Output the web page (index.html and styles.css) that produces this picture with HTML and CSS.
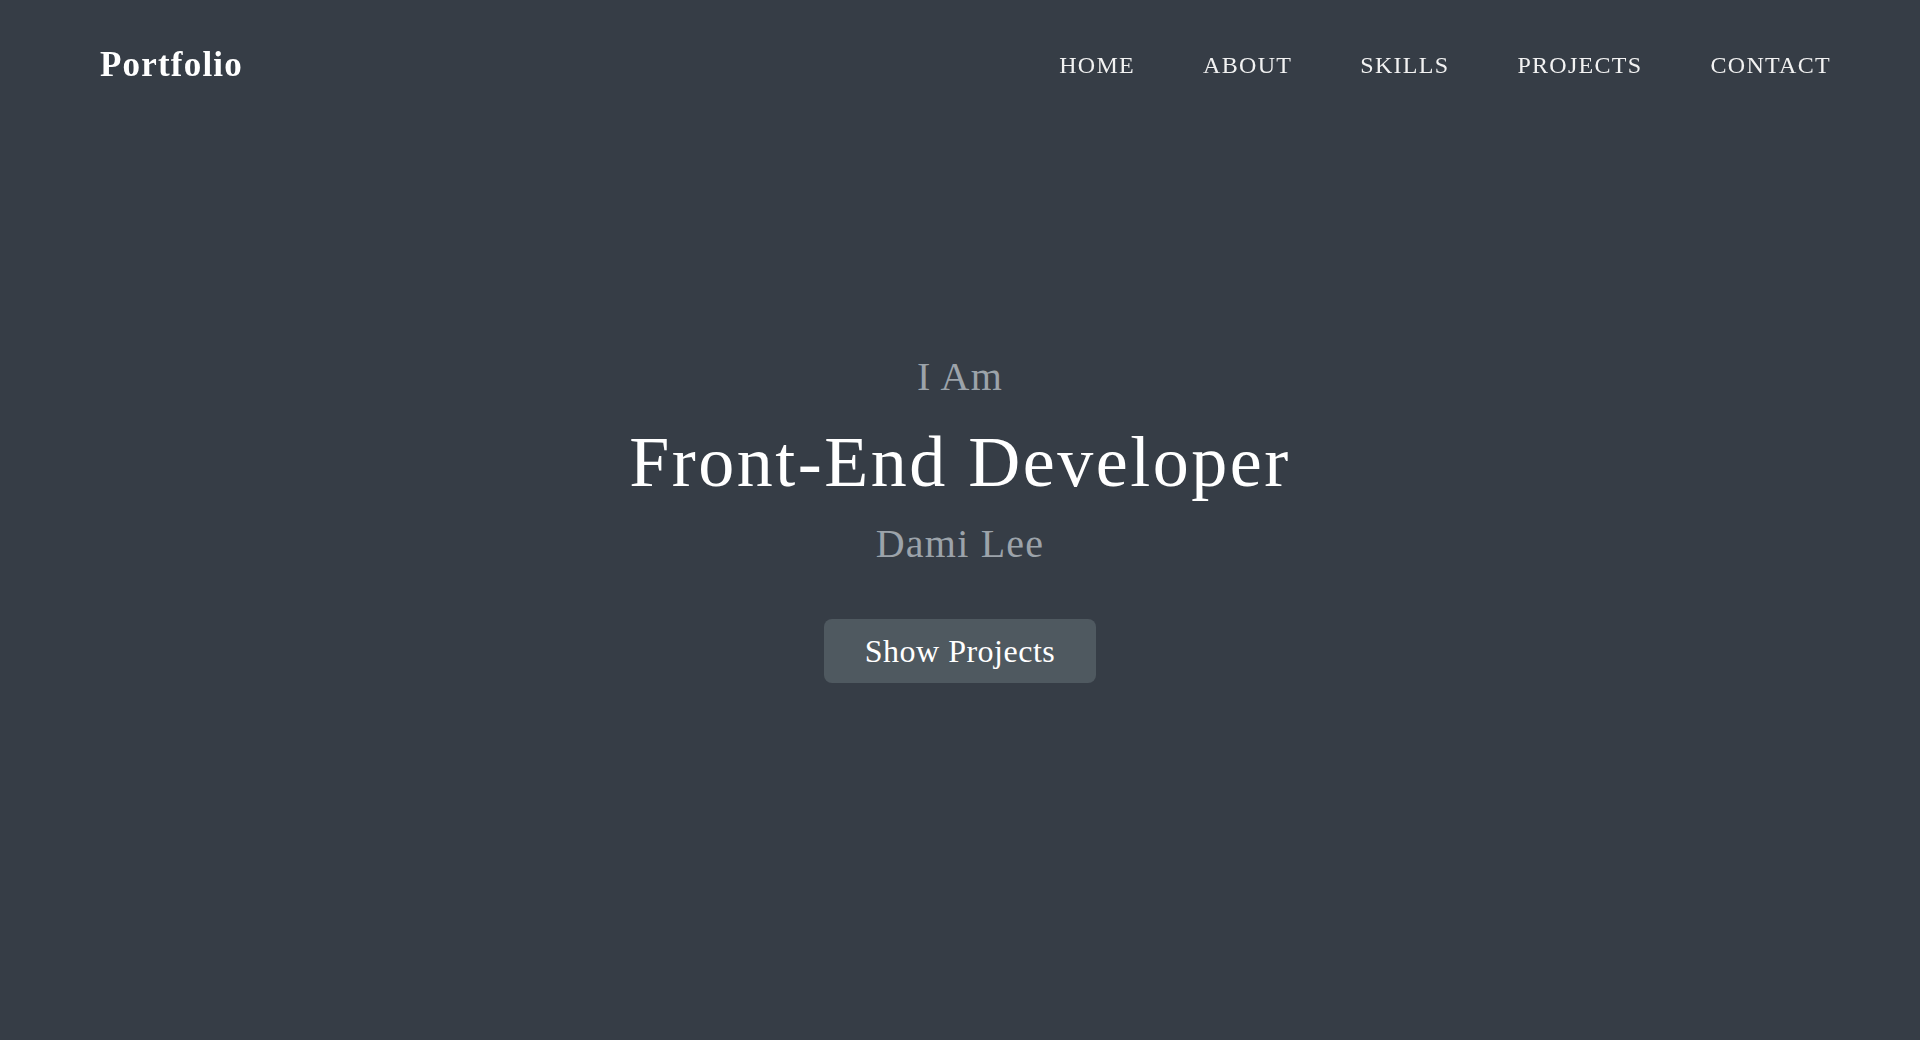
FILE: index.html
```html
<!DOCTYPE html>
<html lang="en">
<head>
<meta charset="utf-8">
<title>Portfolio</title>
<link rel="stylesheet" href="styles.css">
</head>
<body>
<header class="site-header">
  <a class="logo" href="#">Portfolio</a>
  <nav class="nav">
    <a href="#" class="nav-link">HOME</a>
    <a href="#" class="nav-link">ABOUT</a>
    <a href="#" class="nav-link">SKILLS</a>
    <a href="#" class="nav-link">PROJECTS</a>
    <a href="#" class="nav-link">CONTACT</a>
  </nav>
</header>
<main class="hero">
  <div class="hero-inner">
    <p class="hero-pre">I Am</p>
    <h1 class="hero-title">Front-End Developer</h1>
    <p class="hero-name">Dami Lee</p>
    <a href="#" class="hero-btn">Show Projects</a>
  </div>
</main>
</body>
</html>
```
FILE: styles.css
```css
* { box-sizing: border-box; }
html, body {
  margin: 0;
  padding: 0;
}
body {
  background: #363d46;
  color: #f4f4f4;
  font-family: "Liberation Serif", "Times New Roman", serif;
}
a { color: inherit; text-decoration: none; }

.site-header {
  position: fixed;
  top: 0;
  left: 0;
  right: 0;
  height: 129px;
  display: flex;
  align-items: center;
  justify-content: space-between;
  padding: 0 89px 0 100px;
}
.logo {
  font-size: 35px;
  font-weight: 700;
  line-height: 1;
  letter-spacing: 1.2px;
  color: #ffffff;
}
.nav {
  display: flex;
  gap: 68px;
}
.nav-link {
  font-size: 24px;
  line-height: 1;
  letter-spacing: 1.3px;
  color: #f2f2f2;
}

.hero {
  min-height: 100vh;
  display: flex;
  align-items: center;
  justify-content: center;
}
.hero-inner {
  display: flex;
  flex-direction: column;
  align-items: center;
  text-align: center;
}
.hero-pre, .hero-name {
  margin: 0;
  font-size: 40px;
  line-height: 1;
  letter-spacing: 1.2px;
  color: #9ca3aa;
}
.hero-title {
  margin: 29px 0 0;
  font-size: 72px;
  font-weight: 400;
  line-height: 1;
  letter-spacing: 2.5px;
  color: #ffffff;
}
.hero-name {
  margin-top: 26px;
}
.hero-btn {
  margin-top: 55px;
  display: inline-block;
  background: #4f5960;
  color: #ffffff;
  font-size: 32px;
  line-height: 1;
  letter-spacing: 0.5px;
  padding: 16px 41px;
  border-radius: 8px;
}
```
